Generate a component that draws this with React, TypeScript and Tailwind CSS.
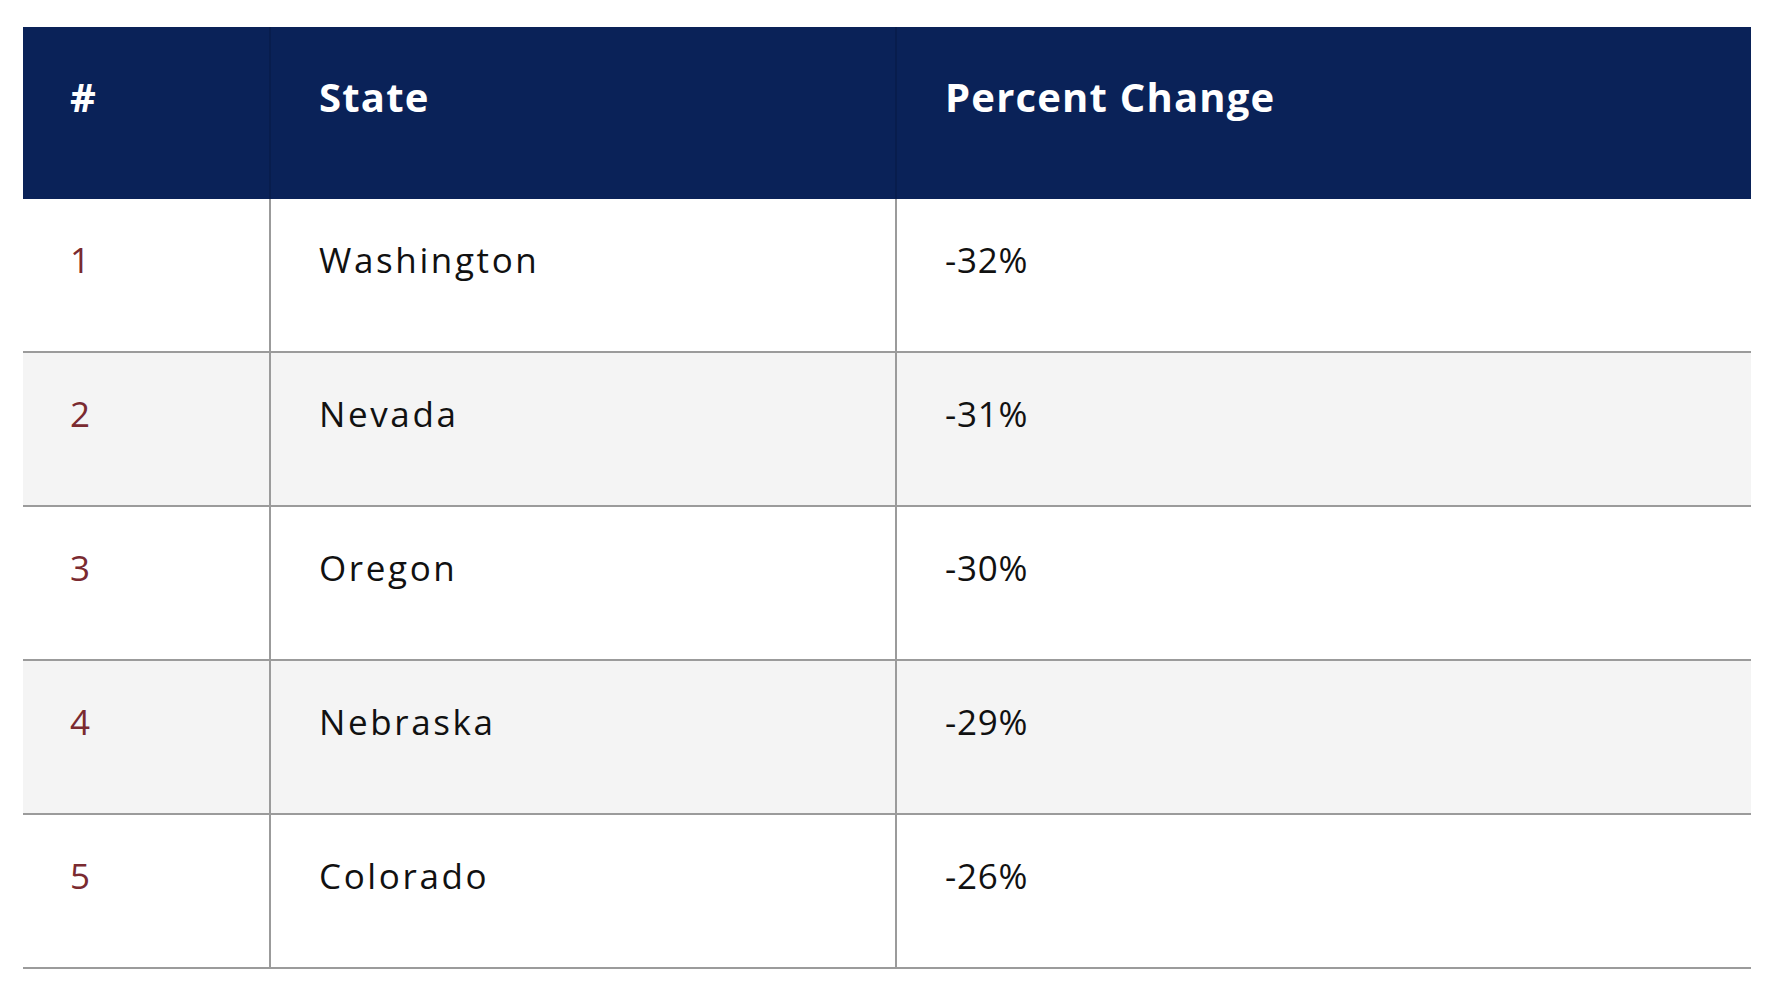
const rows = [
  { rank: 1, state: 'Washington', change: '-32%' },
  { rank: 2, state: 'Nevada', change: '-31%' },
  { rank: 3, state: 'Oregon', change: '-30%' },
  { rank: 4, state: 'Nebraska', change: '-29%' },
  { rank: 5, state: 'Colorado', change: '-26%' },
];

const font = "font-['Open_Sans','Noto_Sans',sans-serif]";

function App() {
  return (
    <div className={`min-h-screen bg-white pt-[27px] pl-[23px] ${font}`}>
      <div className="w-[1728px]">
        <div className="grid h-[172px] grid-cols-[248px_626px_1fr] bg-[#0a2258] text-[40px] leading-none font-bold tracking-[0.03em] text-white">
          <div className="border-r-2 border-[#081d4d] pt-[50px] pl-[47px]">#</div>
          <div className="border-r-2 border-[#081d4d] pt-[50px] pl-[48px]">State</div>
          <div className="pt-[50px] pl-[48px]">Percent Change</div>
        </div>
        {rows.map((r, i) => (
          <div
            key={r.rank}
            className={`grid h-[154px] grid-cols-[248px_626px_1fr] border-b-2 border-[#9b9b9b] text-[35px] leading-none ${
              i % 2 === 1 ? 'bg-[#f4f4f4]' : 'bg-white'
            }`}
          >
            <div className="border-r-2 border-[#9b9b9b] pt-[43px] pl-[47px] text-[#7a2a30]">{r.rank}</div>
            <div className="border-r-2 border-[#9b9b9b] pt-[43px] pl-[48px] tracking-[0.075em] text-[#111111]">
              {r.state}
            </div>
            <div className="pt-[43px] pl-[48px] tracking-[0.02em] text-[#111111]">{r.change}</div>
          </div>
        ))}
      </div>
    </div>
  );
}

export default App;
